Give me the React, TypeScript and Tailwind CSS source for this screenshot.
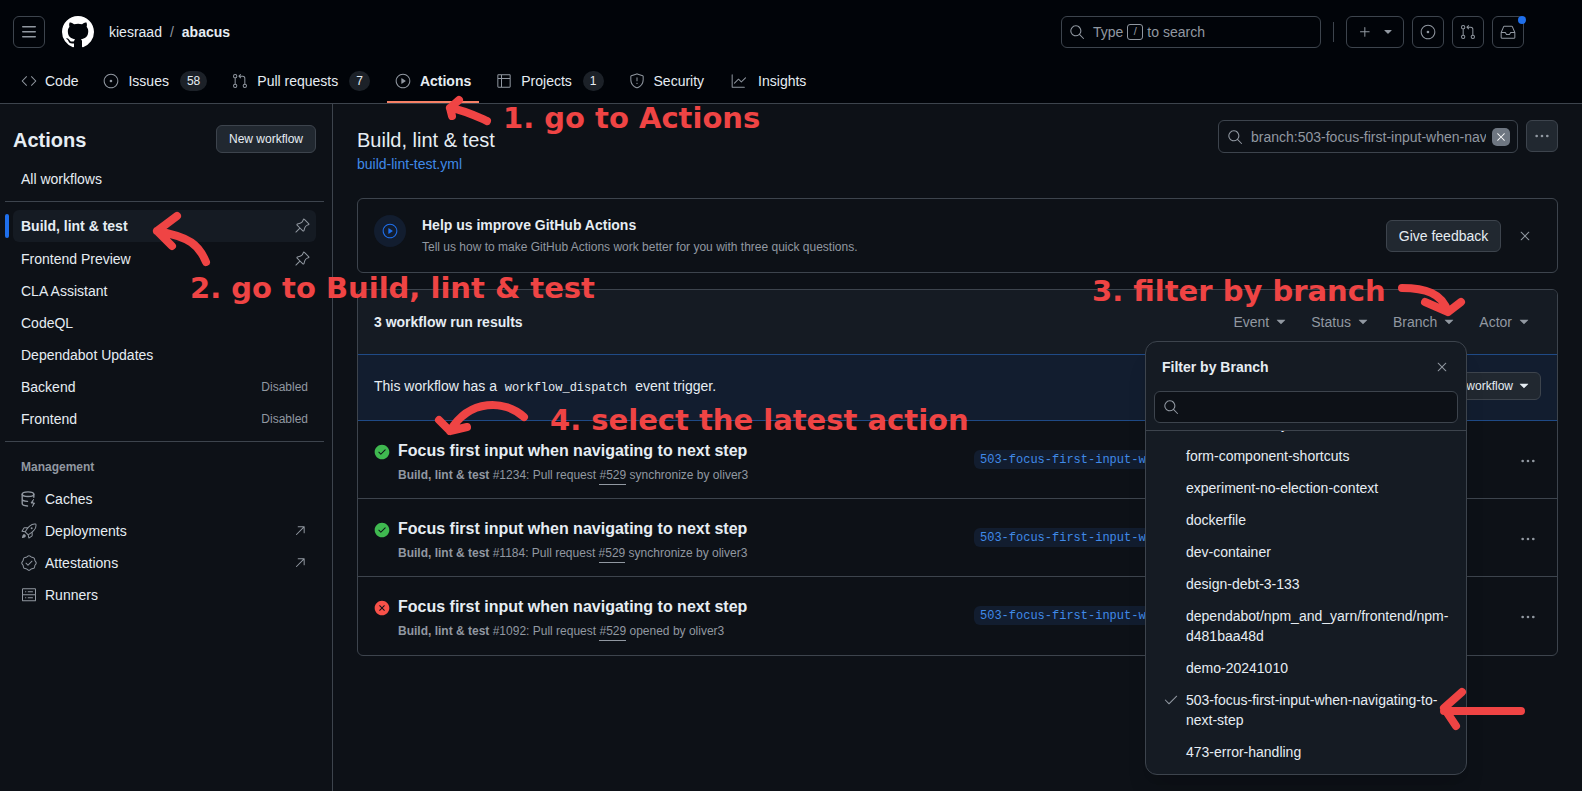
import {
  GoArrowUpRight,
  GoCheck,
  GoCheckCircleFill,
  GoCode,
  GoGitPullRequest,
  GoGraph,
  GoInbox,
  GoIssueOpened,
  GoKebabHorizontal,
  GoPin,
  GoPlay,
  GoPlus,
  GoRocket,
  GoSearch,
  GoServer,
  GoShield,
  GoTable,
  GoTriangleDown,
  GoVerified,
  GoX,
  GoXCircleFill,
} from 'react-icons/go';
import type { IconType } from 'react-icons';

function ThreeBars() {
  return (
    <svg viewBox="0 0 16 16" width="16" height="16" fill="currentColor">
      <path d="M1 2.75A.75.75 0 0 1 1.75 2h12.5a.75.75 0 0 1 0 1.5H1.75A.75.75 0 0 1 1 2.75Zm0 5A.75.75 0 0 1 1.75 7h12.5a.75.75 0 0 1 0 1.5H1.75A.75.75 0 0 1 1 7.75ZM1.75 12h12.5a.75.75 0 0 1 0 1.5H1.75a.75.75 0 0 1 0-1.5Z" />
    </svg>
  );
}

function GithubMark() {
  return (
    <svg viewBox="0 0 16 16" width="32" height="32" fill="currentColor" className="ml-[17px] text-white">
      <path d="M8 0c4.42 0 8 3.58 8 8a8.013 8.013 0 0 1-5.45 7.59c-.4.08-.55-.17-.55-.38 0-.27.01-1.13.01-2.2 0-.75-.25-1.23-.54-1.48 1.78-.2 3.65-.88 3.65-3.95 0-.88-.31-1.59-.82-2.15.08-.2.36-1.02-.08-2.12 0 0-.67-.22-2.2.82-.64-.18-1.32-.27-2-.27-.68 0-1.36.09-2 .27-1.53-1.03-2.2-.82-2.2-.82-.44 1.1-.16 1.92-.08 2.12-.51.56-.82 1.28-.82 2.15 0 3.06 1.86 3.75 3.64 3.95-.23.2-.44.55-.51 1.07-.46.21-1.61.55-2.33-.66-.15-.24-.6-.83-1.23-.82-.67.01-.27.38.01.53.34.19.73.9.82 1.13.16.45.68 1.31 2.69.94 0 .67.01 1.3.01 1.49 0 .21-.15.45-.55.38A7.995 7.995 0 0 1 0 8c0-4.42 3.58-8 8-8Z" />
    </svg>
  );
}

function CacheIcon({ size, className }: { size: number; className?: string }) {
  return (
    <svg viewBox="0 0 16 16" width={size} height={size} fill="none" stroke="currentColor" strokeWidth="1.4" strokeLinecap="round" strokeLinejoin="round" className={className}>
      <ellipse cx="7" cy="3.2" rx="5.8" ry="2.3" />
      <path d="M1.2 3.2v9.4c0 1.3 2.2 2.3 5.3 2.4M1.2 8c0 1.2 2.2 2.2 5.3 2.4M12.8 3.2v3" />
      <path d="M12.5 8.5 10 12h3.5L11.5 15.5" fill="currentColor" strokeWidth="1" />
    </svg>
  );
}

type TabIcon = IconType | typeof CacheIcon;

const tabs: { label: string; icon: IconType; count?: string; active?: boolean }[] = [
  { label: 'Code', icon: GoCode },
  { label: 'Issues', icon: GoIssueOpened, count: '58' },
  { label: 'Pull requests', icon: GoGitPullRequest, count: '7' },
  { label: 'Actions', icon: GoPlay, active: true },
  { label: 'Projects', icon: GoTable, count: '1' },
  { label: 'Security', icon: GoShield },
  { label: 'Insights', icon: GoGraph },
];

const workflows: { label: string; pinned?: boolean; active?: boolean; disabled?: boolean }[] = [
  { label: 'Build, lint & test', pinned: true, active: true },
  { label: 'Frontend Preview', pinned: true },
  { label: 'CLA Assistant' },
  { label: 'CodeQL' },
  { label: 'Dependabot Updates' },
  { label: 'Backend', disabled: true },
  { label: 'Frontend', disabled: true },
];

const management: { label: string; icon: TabIcon; external?: boolean }[] = [
  { label: 'Caches', icon: CacheIcon },
  { label: 'Deployments', icon: GoRocket, external: true },
  { label: 'Attestations', icon: GoVerified, external: true },
  { label: 'Runners', icon: GoServer },
];

const runs = [
  { id: '#1234', action: 'synchronize', ok: true },
  { id: '#1184', action: 'synchronize', ok: true },
  { id: '#1092', action: 'opened', ok: false },
];

const branches = [
  'form-component-shortcuts',
  'experiment-no-election-context',
  'dockerfile',
  'dev-container',
  'design-debt-3-133',
  'dependabot/npm_and_yarn/frontend/npm-d481baa48d',
  'demo-20241010',
  '503-focus-first-input-when-navigating-to-next-step',
  '473-error-handling',
];

const notes = [
  { text: '1. go to Actions', className: 'left-[503px] top-[100px]' },
  { text: '2. go to Build, lint & test', className: 'left-[190px] top-[270px]' },
  { text: '3. filter by branch', className: 'left-[1092px] top-[273px]' },
  { text: '4. select the latest action', className: 'left-[550px] top-[402px]' },
];

function IconButton({ icon: Icon }: { icon: IconType }) {
  return (
    <div className="flex h-8 w-8 items-center justify-center rounded-md border border-[#3d444d] text-[#9198a1]">
      <Icon size={16} />
    </div>
  );
}

function Filter({ label }: { label: string }) {
  return (
    <span className="flex items-center gap-1 text-sm text-[#9198a1]">
      {label}
      <GoTriangleDown size={16} />
    </span>
  );
}

function Header() {
  return (
    <header className="h-[104px] shrink-0 border-b border-[#3d444d] bg-[#010409]">
      <div className="flex h-8 translate-y-4 items-center pl-[13px] pr-[58px]">
        <div className="flex h-8 w-8 items-center justify-center rounded-md border border-[#3d444d] text-[#9198a1]">
          <ThreeBars />
        </div>
        <GithubMark />
        <span className="ml-[15px] text-sm text-[#e6edf3]">kiesraad</span>
        <span className="mx-2 text-sm text-[#9198a1]">/</span>
        <span className="text-sm font-semibold text-[#e6edf3]">abacus</span>

        <div className="ml-auto flex h-8 w-[260px] items-center rounded-md border border-[#3d444d] pl-[7px] text-sm text-[#9198a1]">
          <GoSearch size={16} />
          <span className="ml-2">Type</span>
          <span className="mx-1 flex h-[16px] w-[16px] items-center justify-center rounded-[3px] border border-[#9198a1] text-[11px]">/</span>
          <span>to search</span>
        </div>
        <div className="ml-3 h-5 w-px bg-[#3d444d]" />
        <div className="ml-3 flex h-8 w-[58px] items-center gap-[8px] rounded-md border border-[#3d444d] pl-[10px] text-[#9198a1]">
          <GoPlus size={16} />
          <GoTriangleDown size={14} />
        </div>
        <div className="ml-2 flex gap-2">
          <IconButton icon={GoIssueOpened} />
          <IconButton icon={GoGitPullRequest} />
          <div className="relative">
            <IconButton icon={GoInbox} />
            <span className="absolute right-[-2px] top-0 h-[8px] w-[8px] rounded-full bg-[#1f6feb]" />
          </div>
        </div>
      </div>

      <nav className="flex h-[44px] translate-y-[27px] items-center gap-[9px] pl-[13px]">
        {tabs.map((tab) => (
          <div
            key={tab.label}
            className={`relative flex h-full items-center gap-[9px] px-2 text-sm text-[#e6edf3] first:gap-[8px] last:ml-[2px] last:gap-[11px] ${tab.active ? 'font-semibold' : ''}`}
          >
            <tab.icon size={16} className="text-[#9198a1]" />
            <span>{tab.label}</span>
            {tab.count && (
              <span className="ml-[2px] flex h-[20px] min-w-[20px] items-center justify-center rounded-full bg-[#2f353d99] px-[7px] text-xs">
                {tab.count}
              </span>
            )}
            {tab.active && <span className="absolute inset-x-0 bottom-0 h-[2px] bg-[#f78166]" />}
          </div>
        ))}
      </nav>
    </header>
  );
}

function Sidebar() {
  return (
    <aside className="w-[333px] shrink-0 border-r border-[#3d444d] pt-[21px] text-sm text-[#e6edf3]">
      <div className="flex h-7 items-center justify-between pl-[13px] pr-[16px]">
        <h2 className="mt-[2px] text-xl font-semibold">Actions</h2>
        <span className="flex h-7 w-[100px] items-center justify-center rounded-md border border-[#3d444d] bg-[#212830] text-xs">
          New workflow
        </span>
      </div>
      <div className="mt-[10px] flex h-8 items-center pl-[21px]">All workflows</div>
      <div className="ml-[5px] mr-[8px] mt-[6px] h-px bg-[#3d444d]" />
      <ul className="mt-[8px]">
        {workflows.map((item) => (
          <li key={item.label} className="relative flex h-8 items-center pl-[13px] pr-[16px] first:mb-[1px]">
            {item.active && <span className="absolute left-[5px] top-[4px] h-6 w-[4px] rounded-full bg-[#1f6feb]" />}
            <div className={`flex h-8 flex-1 items-center justify-between rounded-md pl-2 pr-2 ${item.active ? 'bg-[#151b23] font-semibold' : ''}`}>
              <span>{item.label}</span>
              {item.pinned && <GoPin size={16} className="mr-[-2px] -scale-x-100 text-[#9198a1]" />}
              {item.disabled && <span className="text-xs text-[#9198a1]">Disabled</span>}
            </div>
          </li>
        ))}
      </ul>
      <div className="ml-[5px] mr-[8px] mt-[6px] h-px bg-[#3d444d]" />
      <div className="mt-[17px] pl-[21px] text-xs font-semibold leading-4 text-[#9198a1]">Management</div>
      <ul className="mt-[8px]">
        {management.map((item) => (
          <li key={item.label} className="flex h-8 items-center pl-[21px] pr-[24px]">
            <item.icon size={16} className="text-[#9198a1]" />
            <span className="ml-[8px]">{item.label}</span>
            {item.external && <GoArrowUpRight size={16} className="ml-auto text-[#9198a1]" />}
          </li>
        ))}
      </ul>
    </aside>
  );
}

function RunRow({ id, action, ok }: { id: string; action: string; ok: boolean }) {
  return (
    <div className="flex h-[78px] items-center border-b border-[#3d444d] pl-[16px] pr-[21px] last:border-b-0 last:pb-[1px]">
      <div className="mt-[6px] flex w-[600px] items-start">
        {ok ? (
          <GoCheckCircleFill size={16} className="mt-[4px] text-[#3fb950]" />
        ) : (
          <GoXCircleFill size={16} className="mt-[4px] text-[#f85149]" />
        )}
        <div className="ml-2">
          <div className="text-base font-semibold leading-[22px] text-[#e6edf3]">
            Focus first input when navigating to next step
          </div>
          <div className="mt-[3px] text-xs leading-[20px] text-[#9198a1]">
            <span className="font-semibold">Build, lint &amp; test</span> {id}: Pull request{' '}
            <span className="border-b border-[#9198a1] pb-[2px]">#529</span> {action} by oliver3
          </div>
        </div>
      </div>
      <span className="flex h-[19px] w-[180px] items-center overflow-hidden whitespace-nowrap rounded-md bg-[#121d2f] px-[6px] font-['Liberation_Mono'] text-xs text-[#408ae8]">
        503-focus-first-input-when-navigating-to-next-step
      </span>
      <GoKebabHorizontal size={16} className="ml-auto mt-[2px] text-[#9198a1]" />
    </div>
  );
}

function Main() {
  return (
    <main className="min-w-0 flex-1 px-6 pt-4 text-[#e6edf3]">
      <div className="flex items-start justify-between">
        <div className="pt-[5px]">
          <h1 className="text-xl leading-[30px]">Build, lint &amp; test</h1>
          <div className="h-[19px] text-sm leading-[18px] text-[#408ae8]">build-lint-test.yml</div>
        </div>
        <div className="flex gap-2">
          <div className="flex h-[33px] w-[300px] items-center rounded-md border border-[#3d444d] pl-2 pr-[4px] text-sm text-[#9198a1]">
            <GoSearch size={16} className="shrink-0" />
            <span className="ml-[8px] w-[235px] overflow-hidden whitespace-nowrap">
              branch:503-focus-first-input-when-navigating-to-next-step
            </span>
            <span className="ml-[6px] flex h-[18px] w-[18px] items-center justify-center rounded-[5px] bg-[#6e7681] text-white">
              <GoX size={14} />
            </span>
          </div>
          <div className="flex h-8 w-8 items-center justify-center rounded-md border border-[#3d444d] bg-[#212830] text-[#9198a1]">
            <GoKebabHorizontal size={16} />
          </div>
        </div>
      </div>

      <section className="mt-6 flex h-[75px] items-center rounded-md border border-[#3d444d] pl-[16px] pr-[24px] pt-[1px]">
        <div className="mt-[-10px] flex h-8 w-8 items-center justify-center rounded-full bg-[#121d2f] text-[#1f6feb]">
          <GoPlay size={16} />
        </div>
        <div className="ml-4">
          <div className="text-sm font-semibold leading-5">Help us improve GitHub Actions</div>
          <div className="mt-[2px] text-xs leading-5 text-[#9198a1]">
            Tell us how to make GitHub Actions work better for you with three quick questions.
          </div>
        </div>
        <span className="ml-auto flex h-8 w-[115px] items-center justify-center rounded-md border border-[#3d444d] bg-[#212830] text-sm">
          Give feedback
        </span>
        <GoX size={16} className="ml-[16px] text-[#9198a1]" />
      </section>

      <section className="mt-4 overflow-hidden rounded-md border border-[#3d444d]">
        <div className="flex h-[65px] items-center justify-between border-b border-[#1f4a86] bg-[#151b23] pl-[16px] pr-[25px]">
          <span className="text-sm font-semibold">3 workflow run results</span>
          <div className="flex gap-[22px]">
            <Filter label="Event" />
            <Filter label="Status" />
            <Filter label="Branch" />
            <Filter label="Actor" />
          </div>
        </div>
        <div className="flex h-[66px] items-center justify-between border-b border-[#1f4a86] bg-[#121d2f] pb-[3px] pl-[16px] pr-[16px] text-sm">
          <span>
            This workflow has a <code className="mx-[4px] font-['Liberation_Mono'] text-xs">workflow_dispatch</code> event trigger.
          </span>
          <span className="flex h-7 w-[130px] items-center justify-end gap-[3px] rounded-md border border-[#3d444d] bg-[#212830] pr-[8px] text-xs">
            Run workflow
            <GoTriangleDown size={16} />
          </span>
        </div>
        {runs.map((run) => (
          <RunRow key={run.id} {...run} />
        ))}
      </section>
    </main>
  );
}

function BranchMenu() {
  return (
    <div className="absolute left-[1145px] top-[341px] flex h-[434px] w-[322px] flex-col overflow-hidden rounded-xl border border-[#3d444d] bg-[#151b23] text-[#e6edf3] shadow-xl">
      <div className="flex h-[49px] shrink-0 items-center justify-between pl-[16px] pr-[16px]">
        <span className="text-sm font-semibold">Filter by Branch</span>
        <GoX size={16} className="text-[#9198a1]" />
      </div>
      <div className="mx-2 flex h-8 shrink-0 items-center rounded-md border border-[#3d444d] bg-[#0d1117] pl-2 text-[#9198a1]">
        <GoSearch size={16} />
      </div>
      <div className="mt-[7px] flex-1 overflow-hidden border-t border-[#3d444d]">
        <div className="mt-[-23px] text-sm leading-5">
          <div className="py-[6px] pl-[40px] pr-3">feature-data-key</div>
          {branches.map((branch) => (
            <div key={branch} className="relative break-words py-[6px] pl-[40px] pr-[15px]">
              {branch.startsWith('503') && <GoCheck size={16} className="absolute left-[17px] top-[8px] text-[#9198a1]" />}
              {branch}
            </div>
          ))}
        </div>
      </div>
    </div>
  );
}

function Annotations() {
  return (
    <>
      {notes.map((note) => (
        <span
          key={note.text}
          className={`absolute whitespace-nowrap font-['DejaVu_Sans'] text-[29px] font-bold leading-9 text-[#ef4444] ${note.className}`}
        >
          {note.text}
        </span>
      ))}
      <svg className="absolute left-0 top-0 h-[791px] w-[1582px]" fill="none" stroke="#ef4444" strokeWidth="8" strokeLinecap="round" strokeLinejoin="round">
        <path d="M487 121C476 116 464 110 450 108M450 108L459 100M450 108L452 116" />
        <path d="M206 262C199 245 190 237 157 231M157 231L177 216M157 231L172 246" />
        <path d="M1402 288C1425 288 1442 293 1448 312M1448 312L1425 302M1448 312L1461 302" />
        <path d="M524 417C505 400 470 398 450 431M450 431L439 420M450 431L467 427" />
        <path d="M1521 711H1444M1444 708L1462 692M1444 708L1456 726" />
      </svg>
    </>
  );
}

export default function App() {
  return (
    <div className="relative flex h-[791px] w-[1582px] flex-col overflow-hidden bg-[#0d1117] font-['Liberation_Sans',sans-serif]">
      <Header />
      <div className="flex flex-1">
        <Sidebar />
        <Main />
      </div>
      <BranchMenu />
      <Annotations />
    </div>
  );
}
